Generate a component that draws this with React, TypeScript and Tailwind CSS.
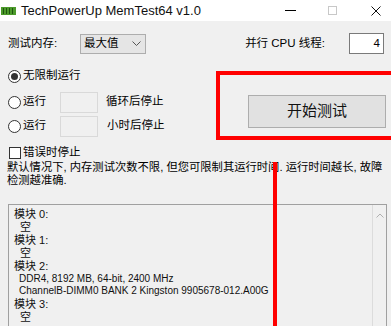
const RamIcon = () => (
  <svg width="15" height="8" viewBox="0 0 15 8" className="ml-[1px]">
    <rect x="0" y="0" width="15" height="8" fill="#4c9a2a" />
    <rect x="2" y="1" width="1" height="6" fill="#1f5410" />
    <rect x="5" y="1" width="1" height="6" fill="#1f5410" />
    <rect x="8" y="1" width="1" height="6" fill="#1f5410" />
    <rect x="11" y="1" width="1" height="6" fill="#1f5410" />
  </svg>
);

const Radio = ({ checked }: { checked?: boolean }) => (
  <div className="flex h-[13px] w-[13px] items-center justify-center rounded-full border border-[#333] bg-white">
    {checked && <div className="h-[7px] w-[7px] rounded-full bg-[#333]" />}
  </div>
);

const Box = () => <div className="h-[21px] w-[38px] border border-[#d9d9d9] bg-[#f0f0f0]" />;

export default function App() {
  return (
    <div className="relative h-[326px] w-[391px] overflow-hidden bg-[#f0f0f0] font-['Liberation_Sans','Noto_Sans_CJK_SC',sans-serif] text-black">
      {/* title bar */}
      <div className="flex h-[21px] items-center bg-white">
        <RamIcon />
        <span className="ml-[5px] text-[13px] leading-none text-[#111]">TechPowerUp MemTest64 v1.0</span>
        <div className="ml-auto mr-[10px] flex items-center">
          <div className="h-[1px] w-[11px] bg-black" />
          <div className="ml-[32px] h-[9px] w-[9px] border border-[#c8c8c8]" />
          <svg width="10" height="10" viewBox="0 0 10 10" className="ml-[34px]">
            <path d="M0.5 0.5 L9.5 9.5 M9.5 0.5 L0.5 9.5" stroke="#111" strokeWidth="1" />
          </svg>
        </div>
      </div>

      {/* memory + threads */}
      <div className="mt-[12px] flex h-[21px] items-center text-[11.5px]">
        <span className="w-[80px] pl-[8px]">测试内存:</span>
        <div className="flex h-[20px] w-[66px] items-center border border-[#adadad] bg-[#e5e5e5] pl-[3px] pr-[4px]">
          <span>最大值</span>
          <svg width="9" height="5" viewBox="0 0 9 5" className="ml-auto">
            <polyline points="0.5,0.5 4.5,4.5 8.5,0.5" fill="none" stroke="#555" strokeWidth="1" />
          </svg>
        </div>
        <span className="ml-auto">并行 CPU 线程:</span>
        <div className="ml-[24px] mr-[7px] flex h-[21px] w-[35px] items-center justify-end border border-[#7a7a7a] bg-white pr-[3px]">
          4
        </div>
      </div>

      {/* options + start */}
      <div className="mt-[10px] flex text-[11.5px]">
        <div className="flex w-[248px] flex-col pl-[8px]">
          <div className="flex h-[24px] items-center">
            <Radio checked />
            <span className="ml-[2px]">无限制运行</span>
          </div>
          <div className="mt-[2px] flex h-[24px] items-center">
            <Radio />
            <span className="ml-[2px] w-[37px]">运行</span>
            <Box />
            <span className="ml-[8px]">循环后停止</span>
          </div>
          <div className="flex h-[24px] items-center">
            <Radio />
            <span className="ml-[2px] w-[37px]">运行</span>
            <Box />
            <span className="ml-[9px]">小时后停止</span>
          </div>
          <div className="mt-[7px] flex h-[16px] items-center">
            <div className="ml-[1px] h-[12px] w-[12px] border border-[#333] bg-white" />
            <span className="ml-[2px]">错误时停止</span>
          </div>
        </div>
        <div className="pt-[31px]">
          <button className="flex h-[33px] w-[138px] items-center justify-center border border-[#adadad] bg-[#e1e1e1] text-[15px] text-[#111]">
            开始测试
          </button>
        </div>
      </div>

      {/* description */}
      <p className="whitespace-nowrap pl-[7px] text-[11.3px] leading-[13px]">
        默认情况下, 内存测试次数不限, 但您可限制其运行时间. 运行时间越长, 故障
        <br />
        检测越准确.
      </p>

      {/* module list */}
      <div className="ml-[8px] mr-[4px] mt-[17px] flex h-[130px] border border-[#a0a0a0] bg-[#f0f0f0]">
        <div className="flex-1 pl-[5px] pt-[3px] text-[11px] leading-[12.9px] text-[#111]">
          <div>模块 0:</div>
          <div className="pl-[6px]">空</div>
          <div>模块 1:</div>
          <div className="pl-[6px]">空</div>
          <div>模块 2:</div>
          <div className="pl-[5px] text-[10px]">DDR4, 8192 MB, 64-bit, 2400 MHz</div>
          <div className="pl-[5px] text-[10px]">ChannelB-DIMM0 BANK 2 Kingston 9905678-012.A00G</div>
          <div>模块 3:</div>
          <div className="pl-[6px]">空</div>
        </div>
        <div className="flex w-[14px] justify-center border-l border-[#dcdcdc] pt-[8px]">
          <svg width="8" height="5" viewBox="0 0 8 5">
            <polyline points="0.5,4.5 4,1 7.5,4.5" fill="none" stroke="#b0b0b0" strokeWidth="1" />
          </svg>
        </div>
      </div>

      {/* red annotations */}
      <div className="absolute left-[216px] top-[71px] h-[69px] w-[185px] border-[4px] border-[#f00]" />
      <div className="absolute left-[273px] top-[162px] h-[170px] w-[4px] bg-[#f00]" />
    </div>
  );
}
